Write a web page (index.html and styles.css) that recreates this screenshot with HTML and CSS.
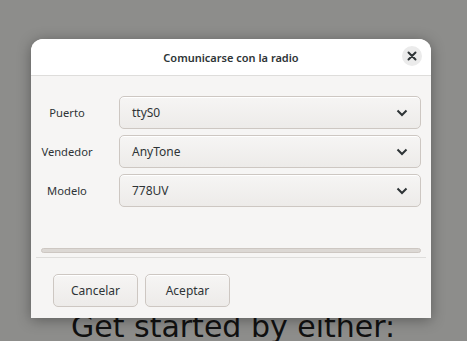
FILE: index.html
```html
<!DOCTYPE html>
<html>
<head>
    <link rel="stylesheet" href="styles.css">
</head>
<body>
    <div class="page">
        <h1>Get started by either:</h1>
    </div>
    <div class="dialog">
        <div class="dialog-header">
            <span class="dialog-title">Comunicarse con la radio</span>
            <button class="close-button">
                <svg width="10" height="10" viewBox="0 0 10 10">
                    <path d="M1.5 1.5 L8.5 8.5 M8.5 1.5 L1.5 8.5" stroke="#2e3436" stroke-width="2" stroke-linecap="round"/>
                </svg>
            </button>
        </div>
        <div class="dialog-body">
            <div class="form">
                <label>Puerto</label>
                <div class="combo"><span>ttyS0</span><svg width="12" height="8" viewBox="0 0 12 8"><path d="M1.5 1.5 L6 6 L10.5 1.5" fill="none" stroke="#2e3436" stroke-width="2"/></svg></div>
                <label>Vendedor</label>
                <div class="combo"><span>AnyTone</span><svg width="12" height="8" viewBox="0 0 12 8"><path d="M1.5 1.5 L6 6 L10.5 1.5" fill="none" stroke="#2e3436" stroke-width="2"/></svg></div>
                <label>Modelo</label>
                <div class="combo"><span>778UV</span><svg width="12" height="8" viewBox="0 0 12 8"><path d="M1.5 1.5 L6 6 L10.5 1.5" fill="none" stroke="#2e3436" stroke-width="2"/></svg></div>
            </div>
            <div class="progress"></div>
        </div>
        <div class="separator"></div>
        <div class="dialog-footer">
            <button class="btn">Cancelar</button>
            <button class="btn">Aceptar</button>
        </div>
    </div>
</body>
</html>
```

FILE: styles.css
```css
body {
    margin: 0;
    height: 341px;
    overflow: hidden;
    background-color: #8d8d8b;
    font-family: 'Noto Sans', sans-serif;
    color: #2e3436;
}

.page {
    padding: 310px 0 0 71px;
}

h1 {
    margin: 0;
    font-family: 'DejaVu Sans', sans-serif;
    font-weight: normal;
    font-size: 30px;
    line-height: 34px;
    color: #111;
    white-space: nowrap;
}

.dialog {
    position: absolute;
    left: 31px;
    top: 39px;
    width: 400px;
    height: 279px;
    background-color: #f6f5f4;
    border-radius: 12px 12px 0 0;
    box-shadow: 0 2px 14px rgba(0, 0, 0, 0.35);
}

.dialog-header {
    position: relative;
    height: 36px;
    display: flex;
    align-items: center;
    justify-content: center;
    background-color: #fff;
    border-bottom: 1px solid #dedddb;
    border-radius: 12px 12px 0 0;
}

.dialog-title {
    font-size: 11px;
    font-weight: 600;
}

.close-button {
    position: absolute;
    right: 9px;
    top: 7px;
    width: 20px;
    height: 20px;
    padding: 0;
    border: none;
    border-radius: 50%;
    background-color: #ebebeb;
    display: flex;
    align-items: center;
    justify-content: center;
}

.dialog-body {
    padding: 20px 10px 0 8px;
}

.form {
    display: grid;
    grid-template-columns: 56px 302px;
    column-gap: 24px;
    row-gap: 6px;
    align-items: center;
}

label {
    font-size: 11.2px;
    text-align: center;
    white-space: nowrap;
}

.combo {
    height: 31px;
    display: flex;
    align-items: center;
    justify-content: space-between;
    padding: 0 12px;
    font-size: 12px;
    border: 1px solid #cdc7c2;
    border-radius: 5px;
    background: linear-gradient(#f6f5f4, #edebe9);
    box-shadow: inset 0 1px #fff;
}

.progress {
    margin: 41px 0 0 2px;
    height: 3px;
    border: 1px solid #cdc7c2;
    border-radius: 3px;
    background-color: #dcd8d4;
}

.separator {
    margin: 4px 5px 0;
    height: 1px;
    background-color: #dedddb;
}

.dialog-footer {
    display: flex;
    gap: 7px;
    padding: 16px 0 0 22px;
}

.btn {
    width: 85px;
    height: 33px;
    font-family: 'Noto Sans', sans-serif;
    font-size: 12px;
    color: #2e3436;
    border: 1px solid #cdc7c2;
    border-radius: 5px;
    background: linear-gradient(#f6f5f4, #edebe9);
    box-shadow: inset 0 1px #fff;
}
```
